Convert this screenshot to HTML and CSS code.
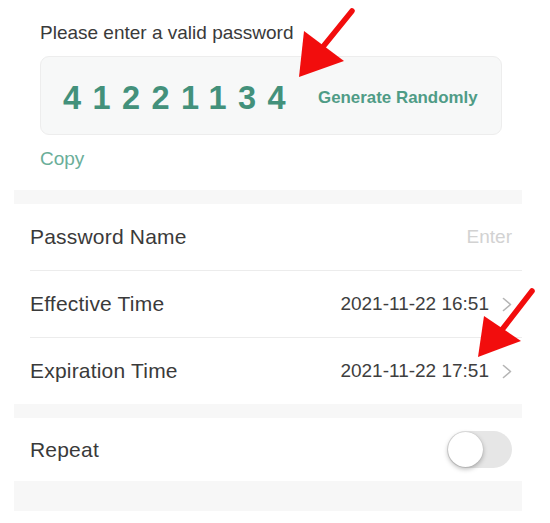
FILE: index.html
```html
<!DOCTYPE html>
<html>
<head>
<meta charset="utf-8">
<link rel="stylesheet" href="styles.css">
</head>
<body>
<div class="page">
  <section class="pw-section">
    <div class="pw-title">Please enter a valid password</div>
    <div class="pw-box">
      <span class="pw-digits">41221134</span>
      <span class="pw-generate">Generate Randomly</span>
    </div>
    <div class="pw-copy">Copy</div>
  </section>
  <div class="band band-top"></div>
  <div class="group">
    <div class="row">
      <span class="row-label">Password Name</span>
      <span class="row-placeholder">Enter</span>
    </div>
    <div class="row">
      <span class="row-label">Effective Time</span>
      <span class="row-value">2021-11-22 16:51
        <svg class="chev" width="10" height="15" viewBox="0 0 10 15"><polyline points="1.5,1.5 8.5,7.5 1.5,13.5" fill="none" stroke="#b5b5b5" stroke-width="1.6" stroke-linecap="round" stroke-linejoin="round"/></svg>
      </span>
    </div>
    <div class="row row-last">
      <span class="row-label">Expiration Time</span>
      <span class="row-value">2021-11-22 17:51
        <svg class="chev" width="10" height="15" viewBox="0 0 10 15"><polyline points="1.5,1.5 8.5,7.5 1.5,13.5" fill="none" stroke="#b5b5b5" stroke-width="1.6" stroke-linecap="round" stroke-linejoin="round"/></svg>
      </span>
    </div>
  </div>
  <div class="band band-mid"></div>
  <div class="row row-repeat">
    <span class="row-label">Repeat</span>
    <span class="toggle"><span class="knob"></span></span>
  </div>
  <div class="band band-bottom"></div>
</div>
<svg class="annot" width="550" height="523" viewBox="0 0 550 523">
  <line x1="352" y1="11" x2="322" y2="48" stroke="#f20d0d" stroke-width="5.5" stroke-linecap="round"/>
  <polygon points="304,31 344,61 299,77" fill="#f20d0d"/>
  <line x1="532" y1="291" x2="501" y2="331" stroke="#f20d0d" stroke-width="5.5" stroke-linecap="round"/>
  <polygon points="484,316 521,341 478,357" fill="#f20d0d"/>
</svg>
</body>
</html>
```
FILE: styles.css
```css
html, body {
  margin: 0;
  padding: 0;
  background: #ffffff;
}
body {
  font-family: "Liberation Sans", Arial, sans-serif;
  color: #333333;
  position: relative;
  width: 550px;
  height: 523px;
  overflow: hidden;
}
.page {
  width: 508px;
  margin-left: 14px;
}
.pw-section {
  padding: 22px 20px 20px 26px;
}
.pw-title {
  font-size: 19px;
  line-height: 22px;
  color: #3a3a3a;
}
.pw-box {
  margin-top: 12px;
  height: 79px;
  box-sizing: border-box;
  border: 1px solid #ededed;
  border-radius: 9px;
  background: #f7f8f8;
  display: flex;
  align-items: center;
  padding: 4px 0 0 22px;
}
.pw-digits {
  font-size: 32.5px;
  line-height: 32px;
  font-weight: bold;
  letter-spacing: 11.4px;
  color: #43917b;
}
.pw-generate {
  margin-left: 21px;
  font-size: 16.9px;
  font-weight: bold;
  color: #4f9c86;
}
.pw-copy {
  margin-top: 13px;
  font-size: 19px;
  line-height: 22px;
  color: #6aae99;
}
.band {
  background: #f7f7f7;
}
.band-top { height: 14px; }
.band-mid { height: 14px; }
.band-bottom { height: 30px; }
.group {
  display: flex;
  flex-direction: column;
}
.row {
  height: 66px;
  margin-left: 16px;
  padding-right: 10px;
  display: flex;
  align-items: center;
  justify-content: space-between;
  border-bottom: 1px solid #ececec;
}
.row-last {
  border-bottom: none;
}
.row-repeat {
  height: 63px;
  border-bottom: none;
}
.row-label {
  font-size: 21px;
  color: #3a3a3a;
  letter-spacing: 0.2px;
}
.row-placeholder {
  font-size: 19px;
  color: #d2d2d2;
}
.row-value {
  font-size: 19px;
  color: #3e3e3e;
  display: flex;
  align-items: center;
  gap: 13px;
}
.chev {
  display: block;
}
.toggle {
  width: 65px;
  height: 37px;
  border-radius: 19px;
  background: #e6e6e6;
  display: flex;
  align-items: center;
  padding-left: 1px;
  box-sizing: border-box;
}
.knob {
  width: 35px;
  height: 35px;
  border-radius: 50%;
  background: #ffffff;
  box-shadow: 0 2px 5px rgba(0,0,0,0.28), 0 0 1px rgba(0,0,0,0.2);
}
.annot {
  position: absolute;
  left: 0;
  top: 0;
  pointer-events: none;
}
```
